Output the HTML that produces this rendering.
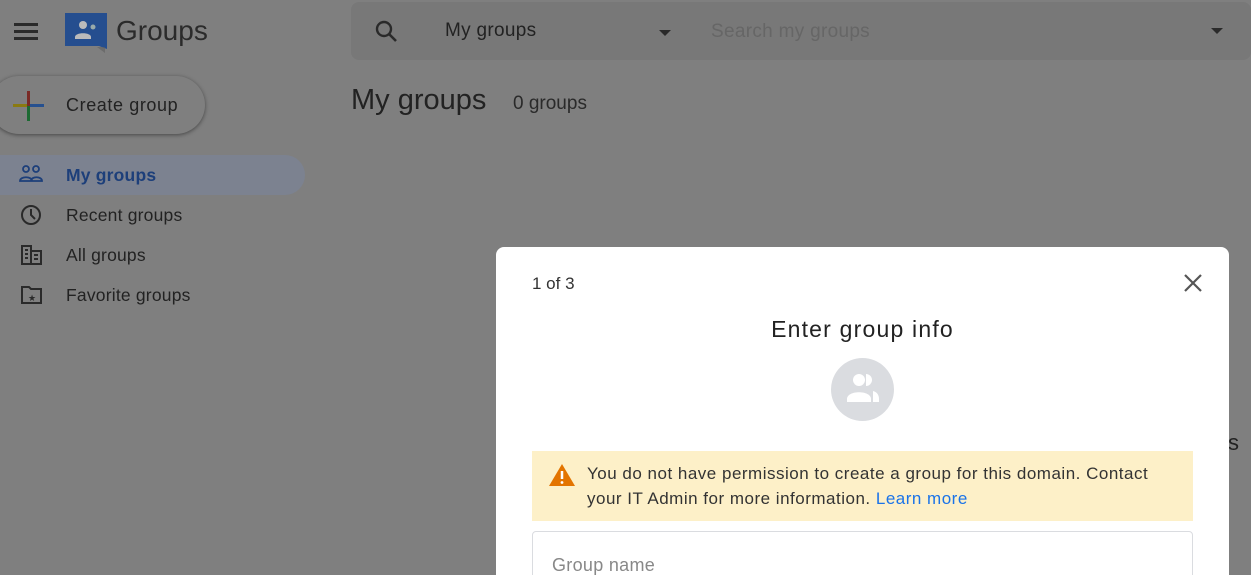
<!DOCTYPE html>
<html><head><meta charset="utf-8"><style>
html,body{margin:0;width:1251px;height:575px;overflow:hidden}
body{background:#7f7f7f;font-family:"Liberation Sans",sans-serif;position:relative;color:#1f1f1f}
.abs{position:absolute}
.nav{position:absolute;left:66px;font-size:17.5px;color:#222;letter-spacing:.2px}
</style></head><body>
<div class="abs" style="left:14px;top:23px;width:24px;height:3px;background:#2a2a2a;box-shadow:0 7px 0 #2a2a2a,0 14px 0 #2a2a2a"></div>
<svg class="abs" style="left:63px;top:11px" width="46" height="44" viewBox="0 0 46 44"><path d="M2 2h42v36l-8-3H2z" fill="#254e8f"/><path d="M2 36h32l8 6V36z" fill="#5f5f5f" opacity=".6"/><circle cx="20" cy="14" r="4" fill="#bbb"/><path d="M12 26c0-5 16-5 16 0v2H12z" fill="#bbb"/><circle cx="30" cy="16" r="2.5" fill="#9aa"/></svg>
<div class="abs" style="left:116px;top:15px;font-size:28px;color:#2b2b2b">Groups</div>
<div class="abs" style="left:351px;top:2px;width:900px;height:58px;background:#787878;border-radius:8px"></div>
<svg class="abs" style="left:374px;top:19px" width="24" height="24" viewBox="0 0 24 24"><circle cx="10" cy="10" r="7" fill="none" stroke="#2a2a2a" stroke-width="2.4"/><path d="M15 15l7 7" stroke="#2a2a2a" stroke-width="2.6"/></svg>
<div class="abs" style="left:445px;top:20px;font-size:19px;color:#222;letter-spacing:.3px">My groups</div>
<div class="abs" style="left:659px;top:30px;border:6px solid transparent;border-top:6px solid #2a2a2a"></div>
<div class="abs" style="left:711px;top:21px;font-size:19px;color:#666;letter-spacing:.3px">Search my groups</div>
<div class="abs" style="left:1211px;top:28px;border:6px solid transparent;border-top:6px solid #2a2a2a"></div>
<div class="abs" style="left:-10px;top:76px;width:215px;height:58px;border-radius:30px;background:#7f7f7f;box-shadow:0 1px 4px rgba(0,0,0,.45)"></div>
<div class="abs" style="left:27px;top:91px;width:3px;height:30px;background:#7a2a25"></div>
<div class="abs" style="left:27px;top:106px;width:3px;height:15px;background:#1c6a32"></div>
<div class="abs" style="left:13px;top:104px;width:14px;height:3px;background:#8a7a10"></div>
<div class="abs" style="left:30px;top:104px;width:14px;height:3px;background:#26508f"></div>
<div class="abs" style="left:66px;top:95px;font-size:18px;color:#222;letter-spacing:.6px">Create group</div>
<div class="abs" style="left:-20px;top:155px;width:325px;height:40px;border-radius:0 20px 20px 0;background:#7c8290"></div>
<svg class="abs" style="left:19px;top:165px" width="24" height="18" viewBox="0 0 24 18"><g fill="none" stroke="#1d3f7a" stroke-width="1.8"><circle cx="7" cy="4" r="3"/><circle cx="17" cy="4" r="3"/><path d="M1 16c0-5 12-5 12 0zM12 16c0-5 11-5 11 0z"/></g></svg>
<div class="nav" style="top:165px;color:#1d3f7a;font-weight:bold">My groups</div>
<svg class="abs" style="left:20px;top:204px" width="22" height="22"><circle cx="11" cy="11" r="9" fill="none" stroke="#2a2a2a" stroke-width="2"/><path d="M11 5v6l4 4" fill="none" stroke="#2a2a2a" stroke-width="2"/></svg>
<div class="nav" style="top:205px">Recent groups</div>
<svg class="abs" style="left:21px;top:245px" width="22" height="20"><path d="M1 1h9v18H1zM10 6h10v13H10z" fill="none" stroke="#2a2a2a" stroke-width="2"/><path d="M4 5h3M4 9h3M4 13h3M13 10h4M13 14h4" stroke="#2a2a2a" stroke-width="2"/></svg>
<div class="nav" style="top:245px">All groups</div>
<svg class="abs" style="left:21px;top:286px" width="22" height="18"><path d="M1 1h7l2 2h10v14H1z" fill="none" stroke="#2a2a2a" stroke-width="2"/><text x="11" y="15" font-size="9" fill="#2a2a2a" text-anchor="middle">★</text></svg>
<div class="nav" style="top:285px">Favorite groups</div>
<div class="abs" style="left:351px;top:84px;font-size:29px;color:#222">My groups</div>
<div class="abs" style="left:513px;top:93px;font-size:19px;color:#2a2a2a">0 groups</div>
<div class="abs" style="left:1228px;top:430px;font-size:22px;color:#222">s</div>
<div class="abs" style="left:496px;top:247px;width:733px;height:340px;background:#fff;border-radius:8px">
 <div class="abs" style="left:36px;top:27px;font-size:17px;color:#333">1 of 3</div>
 <svg class="abs" style="left:688px;top:27px" width="18" height="18"><path d="M1 1l16 16M17 1L1 17" stroke="#555" stroke-width="2.2"/></svg>
 <div class="abs" style="left:0;width:733px;text-align:center;top:69px;font-size:23px;color:#222;letter-spacing:1.2px">Enter group info</div>
 <div class="abs" style="left:335px;top:111px;width:63px;height:63px;border-radius:50%;background:#dadce0"></div>
 <svg class="abs" style="left:348px;top:124px" width="38" height="34" viewBox="0 0 38 34"><circle cx="15" cy="9" r="6" fill="#fff"/><path d="M3 28c0-9 24-9 24 0v3H3z" fill="#fff"/><path d="M22 3a6 6 0 0 1 0 12zM29 20c4 1 6 4 6 8v3h-6z" fill="#fff"/></svg>
 <div class="abs" style="left:36px;top:204px;width:661px;height:70px;background:#fdf0c8"></div>
 <svg class="abs" style="left:52px;top:215px" width="28" height="26"><path d="M14 2L27 24H1z" fill="#e37400"/><path d="M14 9v8" stroke="#fff" stroke-width="2.5"/><circle cx="14" cy="20.5" r="1.4" fill="#fff"/></svg>
 <div class="abs" style="left:91px;top:214px;font-size:17px;line-height:25px;color:#333;letter-spacing:.5px;white-space:nowrap">You do not have permission to create a group for this domain. Contact<br>your IT Admin for more information. <span style="color:#1a73e8">Learn more</span></div>
 <div class="abs" style="left:36px;top:284px;width:659px;height:70px;border:1px solid #dadce0;border-radius:4px"></div>
 <div class="abs" style="left:56px;top:308px;font-size:18px;color:#888;letter-spacing:.3px">Group name</div>
</div>
</body></html>
